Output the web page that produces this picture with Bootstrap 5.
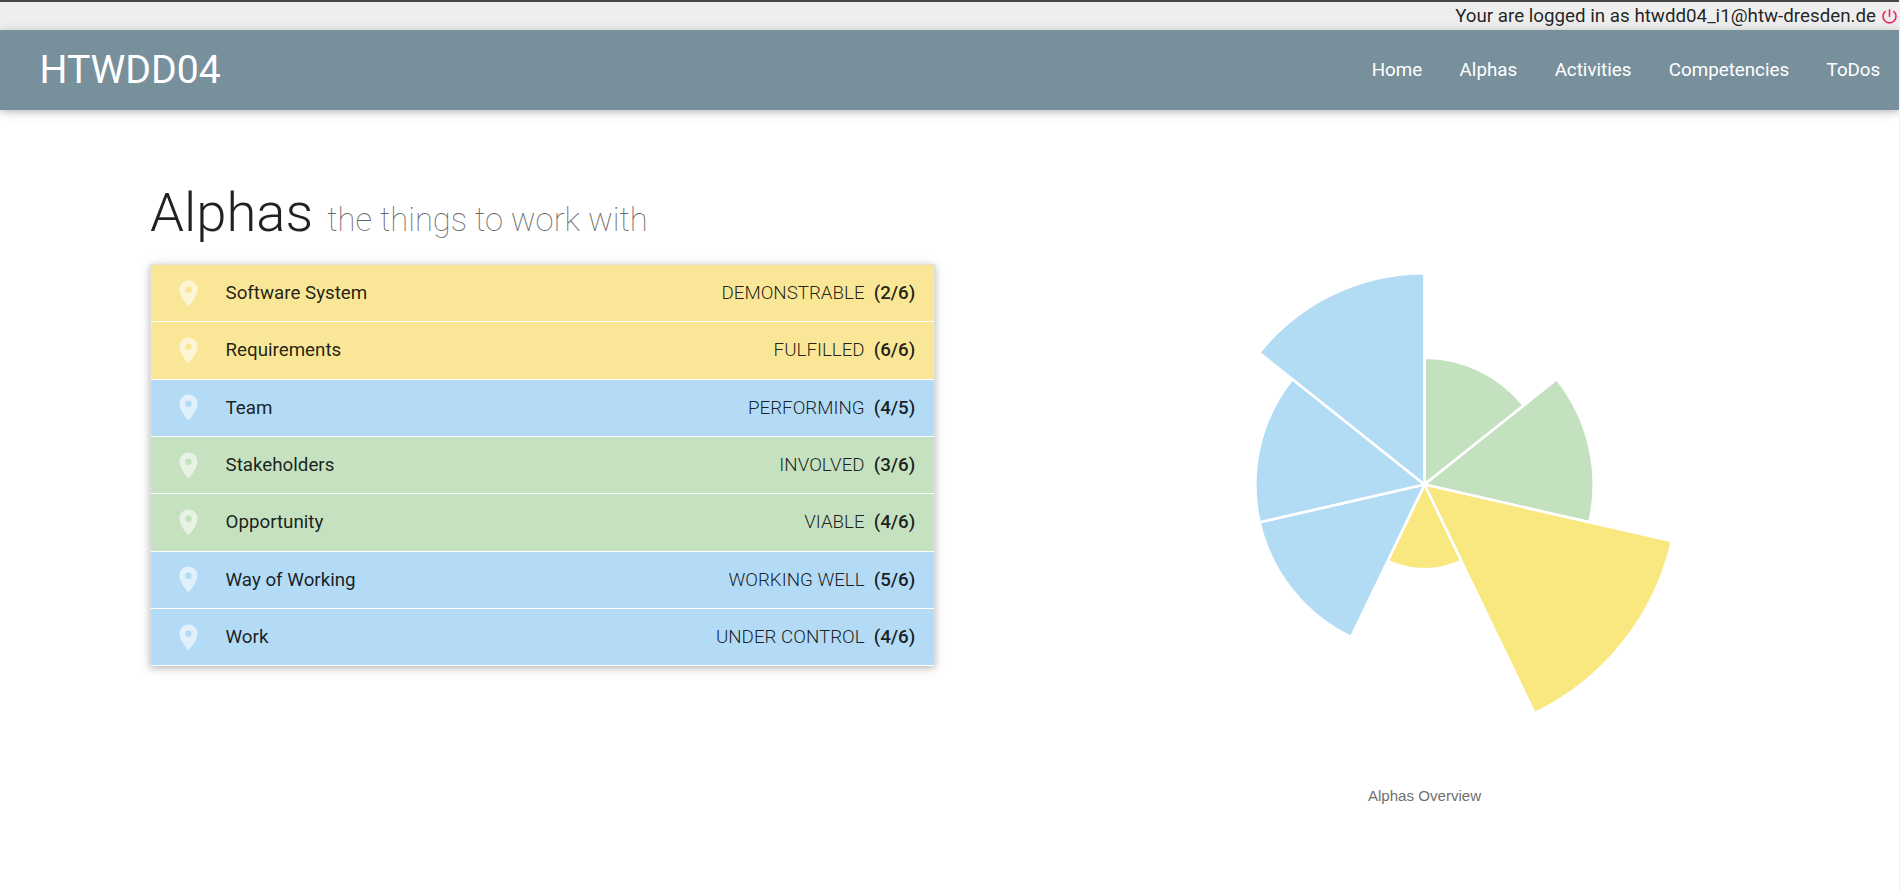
<!DOCTYPE html>
<html lang="en">
<head>
<meta charset="utf-8">
<title>HTWDD04 – Alphas</title>
<link href="https://cdn.jsdelivr.net/npm/bootstrap@5.3.0/dist/css/bootstrap.min.css" rel="stylesheet">
<style>
  body { font-family: Roboto, sans-serif; font-size: 18.75px; line-height: 1.5; color: rgba(0,0,0,.87); background: #fff; height: 891px; overflow: hidden; border-right: 1px solid #f1f1f1; }
  .userbar { height: 30px; background: #eee; border-top: 2px solid #47434b; padding-right: 1px; }
  .userbar svg { width: 17px; height: 17px; margin-left: 5px; }
  .mainnav { --bs-navbar-padding-y: 0; height: 80px; background: #78909c; padding: 0; box-shadow: 0 2px 6px rgba(0,0,0,.16), 0 2px 12px rgba(0,0,0,.14); }
  .mainnav .navbar-brand { font-size: 39.2px; line-height: 80px; padding: 0; margin: 0 0 0 39.5px; color: #fff; }
  .mainnav .nav-link { color: #fff; padding: 0 18.75px; line-height: 80px; }
  .overview { padding-left: 150px; }
  .page-title { font-size: 54.4px; line-height: 60px; font-weight: 300; margin: 73px 0 21px; }
  .page-title small { font-size: 32.75px; line-height: 1; font-weight: 100; color: #666; margin-left: 1px; }
  .alphas { width: 785px; border: 1px solid #e0e0e0; border-bottom: 0; border-radius: 0; box-shadow: 0 2px 6px rgba(0,0,0,.18), 0 2px 12px rgba(0,0,0,.14); }
  .alphas .list-group-item { height: 57.333px; border: 0; border-bottom: 1px solid #fff; border-radius: 0; padding: 0 18.67px 0 21.5px; color: rgba(0,0,0,.87); }
  .alphas svg { width: 31px; height: 31px; margin-right: 22px; fill: #fff; fill-opacity: .6; }
  .state { font-weight: 300; margin-right: 9px; }
  .score { font-weight: 500; }
  .solution { background: #f9e797; }
  .endeavor { background: #b3dbf5; }
  .customer { background: #c5e1c0; }
  .chart { width: 420px; height: 560px; margin: 144px 0 0 315px; }
</style>
</head>
<body>
<div class="userbar d-flex justify-content-end align-items-center">
  <span>Your are logged in as htwdd04_i1@htw-dresden.de</span>
  <svg viewBox="0 0 17 17" fill="none" stroke="#f0245f" stroke-width="1.6"><path d="M8.5 1.2V9M4.7 3.1A6.5 6.5 0 1 0 12.3 3.1"/></svg>
</div>
<nav class="navbar mainnav d-flex flex-nowrap">
  <a class="navbar-brand" href="#">HTWDD04</a>
  <div class="nav ms-auto flex-nowrap">
    <a class="nav-link" href="#">Home</a>
    <a class="nav-link" href="#">Alphas</a>
    <a class="nav-link" href="#">Activities</a>
    <a class="nav-link" href="#">Competencies</a>
    <a class="nav-link" href="#">ToDos</a>
  </div>
</nav>
<svg class="d-none"><symbol id="pin" viewBox="0 0 24 24"><path d="M12 2C8.13 2 5 5.13 5 9c0 5.25 7 13 7 13s7-7.75 7-13c0-3.87-3.13-7-7-7zm0 9.5a2.5 2.5 0 0 1 0-5 2.5 2.5 0 0 1 0 5z"/></symbol></svg>
<main class="overview d-flex align-items-start">
  <section>
    <h1 class="page-title">Alphas <small>the things to work with</small></h1>
    <div class="list-group alphas">
      <a class="list-group-item d-flex align-items-center solution"><svg><use href="#pin"/></svg><span class="me-auto">Software System</span><span class="state">DEMONSTRABLE</span><span class="score">(2/6)</span></a>
      <a class="list-group-item d-flex align-items-center solution"><svg><use href="#pin"/></svg><span class="me-auto">Requirements</span><span class="state">FULFILLED</span><span class="score">(6/6)</span></a>
      <a class="list-group-item d-flex align-items-center endeavor"><svg><use href="#pin"/></svg><span class="me-auto">Team</span><span class="state">PERFORMING</span><span class="score">(4/5)</span></a>
      <a class="list-group-item d-flex align-items-center customer"><svg><use href="#pin"/></svg><span class="me-auto">Stakeholders</span><span class="state">INVOLVED</span><span class="score">(3/6)</span></a>
      <a class="list-group-item d-flex align-items-center customer"><svg><use href="#pin"/></svg><span class="me-auto">Opportunity</span><span class="state">VIABLE</span><span class="score">(4/6)</span></a>
      <a class="list-group-item d-flex align-items-center endeavor"><svg><use href="#pin"/></svg><span class="me-auto">Way of Working</span><span class="state">WORKING WELL</span><span class="score">(5/6)</span></a>
      <a class="list-group-item d-flex align-items-center endeavor"><svg><use href="#pin"/></svg><span class="me-auto">Work</span><span class="state">UNDER CONTROL</span><span class="score">(4/6)</span></a>
    </div>
  </section>
  <svg class="chart flex-shrink-0" viewBox="0 0 420 560">
    <g id="slices" transform="translate(174.5 230.6)" stroke="#fff" stroke-width="2.6"></g>
    <text x="174.5" y="547" text-anchor="middle" font-family="Liberation Sans, sans-serif" font-size="15.1" fill="#707070">Alphas Overview</text>
  </svg>
</main>
<script src="https://cdn.jsdelivr.net/npm/bootstrap@5.3.0/dist/js/bootstrap.bundle.min.js"></script>
<script>
  // Polar area chart: equal angles, radius proportional to the reached state
  const green = '#c4e1bf', yellow = '#f9e780', blue = '#b2dcf4';
  const data = [[3, green], [4, green], [6, yellow], [2, yellow], [4, blue], [4, blue], [5, blue]];
  const unit = 42.3, step = 2 * Math.PI / data.length;
  data.forEach(([value, color], i) => {
    const r = value * unit, a = i * step, b = a + step;
    const p = document.createElementNS('http://www.w3.org/2000/svg', 'path');
    p.setAttribute('d', `M0 0L${r * Math.sin(a)} ${-r * Math.cos(a)}A${r} ${r} 0 0 1 ${r * Math.sin(b)} ${-r * Math.cos(b)}Z`);
    p.setAttribute('fill', color);
    document.getElementById('slices').append(p);
  });
</script>
</body>
</html>
